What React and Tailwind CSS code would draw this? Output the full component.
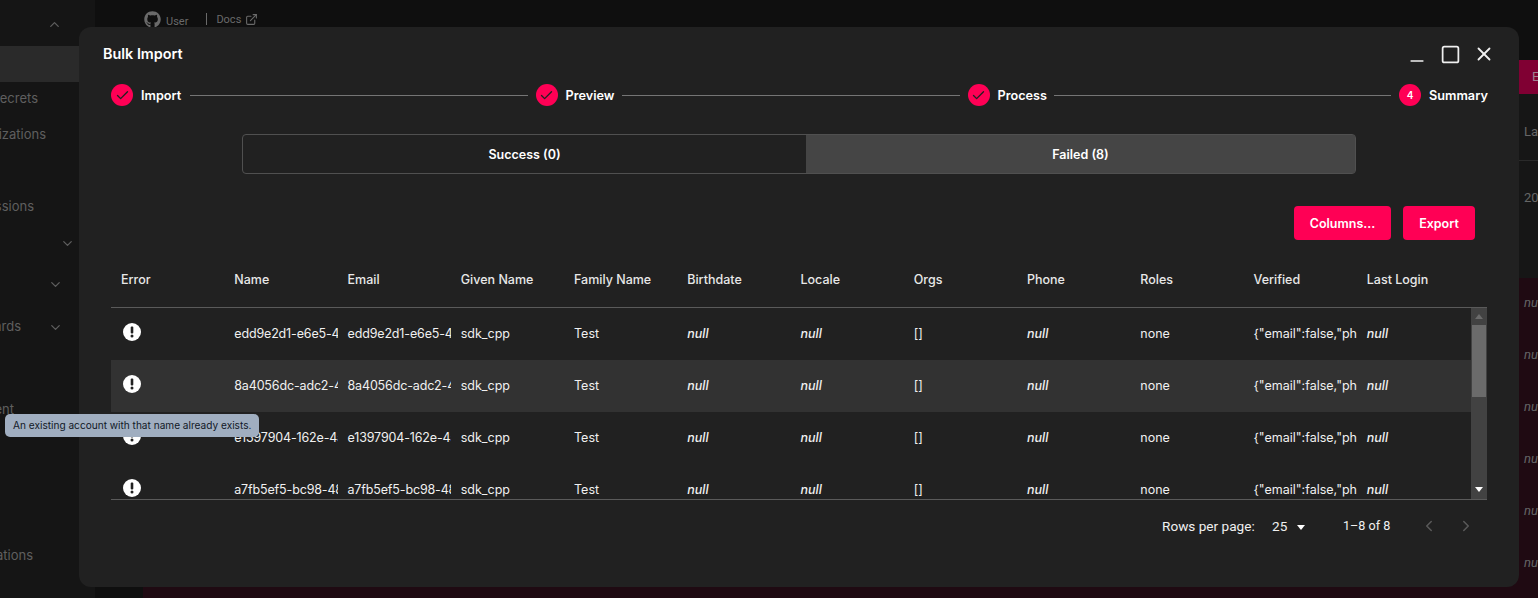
import { Check, ChevronDown, ChevronLeft, ChevronRight, ChevronUp, ExternalLink, Minus, Square, X } from "lucide-react"
import { FaGithub } from "react-icons/fa"

const COLUMNS = ["Error", "Name", "Email", "Given Name", "Family Name", "Birthdate", "Locale", "Orgs", "Phone", "Roles", "Verified", "Last Login"]

const USERS = [
  { id: "edd9e2d1-e6e5-4a3b-9c11-71d2", hover: false },
  { id: "8a4056dc-adc2-4f7e-b0a5-2c9e", hover: true },
  { id: "e1397904-162e-4a8d-93f2-6b1a", hover: false },
  { id: "a7fb5ef5-bc98-48c1-a7d4-0e3f", hover: false },
]

const ErrorIcon = () => (
  <svg viewBox="0 0 18 18" className="w-[18px] h-[18px]">
    <circle cx="9" cy="9" r="9" fill="#fff" />
    <rect x="7.7" y="3.6" width="2.6" height="7" rx="1" fill="#212121" />
    <circle cx="9" cy="13" r="1.5" fill="#212121" />
  </svg>
)

const Step = ({ label, num, width }) => (
  <div className="flex items-center gap-2 shrink-0">
    <div className="w-[22px] h-[22px] rounded-full bg-[#ff0055] flex items-center justify-center text-[10px] font-semibold text-white">
      {num ? num : <Check size={15} strokeWidth={2.2} className="text-[#212121]" />}
    </div>
    <span className={`text-[12.7px] font-semibold text-white pt-[2px] whitespace-nowrap ${width}`}>{label}</span>
  </div>
)

const Line = () => <div className="flex-1 h-px bg-[#757575] mx-2" />

const Cell = ({ children, italic, tight }) => (
  <div className={`w-[113.25px] shrink-0 px-[10px] overflow-hidden whitespace-nowrap ${italic ? "italic font-medium" : ""} ${tight ? "tracking-[-0.15px]" : ""}`}>
    {children}
  </div>
)

const UserRow = ({ user }) => (
  <div className={`flex items-center h-[52px] shrink-0 text-[12.5px] text-[#f0f0f0] ${user.hover ? "bg-[#323232]" : ""}`}>
    <div className="w-[113.25px] shrink-0 pl-[12px] -mt-[5px]">
      <ErrorIcon />
    </div>
    <Cell tight>{user.id}</Cell>
    <Cell tight>{user.id}</Cell>
    <Cell>sdk_cpp</Cell>
    <Cell>Test</Cell>
    <Cell italic>null</Cell>
    <Cell italic>null</Cell>
    <Cell>[]</Cell>
    <Cell italic>null</Cell>
    <Cell>none</Cell>
    <Cell>{'{"email":false,"phone":false}'}</Cell>
    <Cell italic>null</Cell>
  </div>
)

const Sidebar = () => (
  <div className="w-[95px] shrink-0 bg-[#151515] text-[13px] text-[#5f5f5f] overflow-hidden font-['Inter',sans-serif]">
    <div className="h-[46px] pr-[33px] pt-[17px] flex justify-end items-start">
      <ChevronUp size={15} />
    </div>
    <div className="h-9 bg-[#2a2a2a]" />
    <div className="h-[34px] flex items-center"><div className="w-[38px] flex justify-end overflow-hidden whitespace-nowrap">Secrets</div></div>
    <div className="h-[38px] flex items-center"><div className="w-[46px] flex justify-end overflow-hidden whitespace-nowrap">Authorizations</div></div>
    <div className="h-[35px]" />
    <div className="h-[36px] flex items-center"><div className="w-[34px] flex justify-end overflow-hidden whitespace-nowrap">Sessions</div></div>
    <div className="h-[37px] flex justify-end items-center pr-[20px]"><ChevronDown size={15} /></div>
    <div className="h-[44px] flex justify-end items-center pr-[32px]"><ChevronDown size={15} /></div>
    <div className="h-[42px] flex items-center justify-between pr-[32px]">
      <div className="w-[21px] flex justify-end overflow-hidden whitespace-nowrap">Cards</div>
      <ChevronDown size={15} />
    </div>
    <div className="h-[52px]" />
    <div className="h-[20px] flex items-center"><div className="w-[14px] flex justify-end overflow-hidden whitespace-nowrap">Agent</div></div>
    <div className="h-[126px]" />
    <div className="h-[20px] flex items-center"><div className="w-[33px] flex justify-end overflow-hidden whitespace-nowrap">Applications</div></div>
  </div>
)

const Background = () => (
  <div className="flex h-[598px] bg-[#0f0f0f]">
    <Sidebar />
    <div className="flex-1 min-w-0 flex flex-col">
      <div className="h-[60px] flex items-start pl-[49px] pt-[11px] text-[#6a6a6a] text-[11px]">
        <FaGithub size={17} />
        <span className="ml-[5px] mt-[3px]">User</span>
        <div className="w-px h-[12px] bg-[#6a6a6a] ml-[18px] mt-[2px]" />
        <span className="ml-[9px] mt-[1px]">Docs</span>
        <ExternalLink size={13} className="ml-[4px] mt-[2px]" />
      </div>
      <div className="ml-[48px] flex-1 flex flex-col bg-[#161616] text-[13px] text-[#666] whitespace-nowrap overflow-hidden">
        <div className="h-[34px] shrink-0 pl-[1389px] bg-[#800033] text-[#a08090] leading-[34px]">E</div>
        <div className="h-[67px] shrink-0 pl-[1381px] pt-[28px] border-b border-[#2a2a2a]">Last Login</div>
        <div className="h-[117px] shrink-0 pl-[1381px] pt-[27px]">2024-01-01</div>
        <div className="flex-1 bg-[#1f0a12] italic">
          {[0, 1, 2, 3, 4, 5].map(i => (
            <div key={i} className="h-[52px] pl-[1381px] pb-[2px] flex items-center">null</div>
          ))}
        </div>
      </div>
    </div>
  </div>
)

const Modal = () => (
  <div className="absolute left-[79px] top-[27px] w-[1440px] h-[560px] rounded-xl bg-[#212121] text-white flex flex-col font-['Inter',sans-serif]">
    <div className="h-[54px] flex items-center justify-between pl-6 pr-6 shrink-0">
      <h2 className="text-[14.4px] font-semibold">Bulk Import</h2>
      <div className="flex items-center text-[#f0f0f0]">
        <Minus size={20} strokeWidth={2} className="mt-[14px]" />
        <Square size={21} strokeWidth={2} className="ml-[13px]" />
        <X size={22} strokeWidth={2} className="ml-3" />
      </div>
    </div>
    <div className="flex items-center h-[28px] px-8 shrink-0">
      <Step label="Import" width="w-[41px]" />
      <Line />
      <Step label="Preview" width="w-[48.5px]" />
      <Line />
      <Step label="Process" width="w-[48px]" />
      <Line />
      <Step label="Summary" num="4" width="w-[58px]" />
    </div>
    <div className="flex ml-[163px] mt-[25px] w-[1114px] h-10 shrink-0 rounded border border-[#505050] text-[12.5px] font-semibold">
      <div className="w-[563px] flex items-center justify-center pt-[2px]">Success (0)</div>
      <div className="flex-1 bg-[#454545] flex items-center justify-center pt-[2px]">Failed (8)</div>
    </div>
    <div className="flex justify-end gap-3 mt-8 pr-11 h-[34px] shrink-0 text-[12.5px] font-semibold">
      <button className="w-[97px] rounded bg-[#ff0055] pt-[2px]">Columns...</button>
      <button className="w-[72px] rounded bg-[#ff0055] pt-[2px]">Export</button>
    </div>
    <div className="mx-8 mt-[18px] shrink-0 w-[1376px]">
      <div className="flex items-center h-[50px] pb-[4px] text-[12.5px] font-medium text-[#e8e8e8] border-b border-[#5a5a5a]">
        {COLUMNS.map(c => (
          <div key={c} className="w-[113.25px] shrink-0 px-[10px] whitespace-nowrap">{c}</div>
        ))}
      </div>
      <div className="flex h-[192px] border-b border-[#5a5a5a]">
        <div className="flex-1 min-w-0 flex flex-col overflow-hidden">
          {USERS.map(u => <UserRow key={u.id} user={u} />)}
        </div>
        <div className="w-4 shrink-0 bg-[#424242] flex flex-col items-center">
          <div className="h-[17px] flex items-center">
            <div className="w-0 h-0 border-x-[4px] border-x-transparent border-b-[5px] border-b-[#6b6b6b]" />
          </div>
          <div className="w-[14px] h-[72px] bg-[#6b6b6b]" />
          <div className="flex-1 flex items-end pb-[7px]">
            <div className="w-0 h-0 border-x-[4px] border-x-transparent border-t-[5px] border-t-white" />
          </div>
        </div>
      </div>
    </div>
    <div className="flex items-center h-[52px] ml-[1083px] text-[13.6px] text-[#f0f0f0] font-['Roboto',sans-serif] shrink-0">
      <span className="w-[110px] whitespace-nowrap">Rows per page:</span>
      <span className="w-[25px]">25</span>
      <div className="w-0 h-0 border-x-[4px] border-x-transparent border-t-[5px] border-t-white mt-[2px]" />
      <span className="ml-[38px] w-[47px] text-[12.6px] whitespace-nowrap">1–8 of 8</span>
      <ChevronLeft size={18} className="ml-[30px] text-[#5a5a5a]" />
      <ChevronRight size={18} className="ml-[19px] text-[#5a5a5a]" />
    </div>
  </div>
)

export default function App() {
  return (
    <div className="relative h-[598px] w-[1538px] overflow-hidden font-['Roboto',sans-serif]">
      <Background />
      <Modal />
      <div className="absolute left-[5px] top-[414px] w-[254px] h-[23px] rounded-[5px] bg-[#a0aec0] text-[#111827] text-[10.1px] flex items-center pl-2 whitespace-nowrap font-['Inter',sans-serif]">
        An existing account with that name already exists.
      </div>
    </div>
  )
}
